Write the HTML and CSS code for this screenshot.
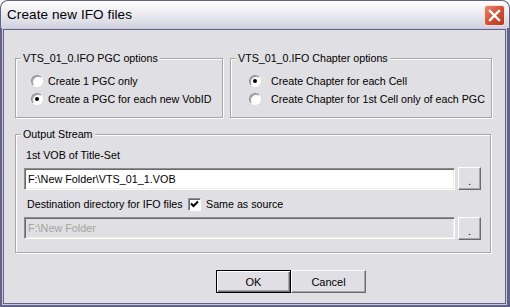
FILE: index.html
```html
<!DOCTYPE html>
<html lang="en">
<head>
  <meta charset="UTF-8" />
  <title>Create new IFO files</title>
  <link rel="stylesheet" href="styles.css">
</head>
<body>
  <div class="window">
    <div class="titlebar">
      <span class="title">Create new IFO files</span>
      <span class="close">
        <svg width="21" height="21" viewBox="0 0 21 21">
          <path d="M6 6 L15 15 M15 6 L6 15" stroke="#fff" stroke-width="2.4" stroke-linecap="square" fill="none" />
        </svg>
      </span>
    </div>
    <div class="frame">
      <div class="client">
        <div class="options">
          <div class="group pgc">
            <span class="legend">VTS_01_0.IFO PGC options</span>
            <label class="radio"><span class="dot"></span>Create 1 PGC only</label>
            <label class="radio"><span class="dot checked"></span>Create a PGC for each new VobID</label>
          </div>
          <div class="group chapter">
            <span class="legend">VTS_01_0.IFO Chapter options</span>
            <label class="radio"><span class="dot checked"></span>Create Chapter for each Cell</label>
            <label class="radio"><span class="dot"></span>Create Chapter for 1st Cell only of each PGC</label>
          </div>
        </div>

        <div class="group output">
          <span class="legend">Output Stream</span>
          <div class="label">1st VOB of Title-Set</div>
          <div class="field-row first">
            <div class="field">F:\New Folder\VTS_01_1.VOB</div>
            <span class="btn browse">.</span>
          </div>
          <div class="check-row">
            <span class="check-label">Destination directory for IFO files</span>
            <span class="check">
              <svg width="9" height="9" viewBox="0 0 9 9">
                <path d="M1 3.5 L3.5 6 L8 1.5" stroke="#000" stroke-width="2" fill="none" />
              </svg>
            </span>
            <span>Same as source</span>
          </div>
          <div class="field-row">
            <div class="field disabled">F:\New Folder</div>
            <span class="btn browse">.</span>
          </div>
        </div>

        <div class="actions">
          <span class="btn default">OK</span>
          <span class="btn">Cancel</span>
        </div>
      </div>
    </div>
  </div>
</body>
</html>
```

FILE: styles.css
```css
body {
  margin: 0;
  font-family: "Liberation Sans", Arial, sans-serif;
  font-size: 10.7px;
  color: #000;
  background: #fff;
  white-space: nowrap;
}
.window {
  width: 510px;
  height: 307px;
  box-sizing: border-box;
  background: #62628a;
  border-radius: 8px 8px 0 0;
  display: flex;
  flex-direction: column;
}
.titlebar {
  height: 27px;
  margin: 1px 1px 0;
  border-radius: 7px 7px 0 0;
  background: linear-gradient(#ffffff, #f0f0f4 35%, #dcdce6 80%, #d2d2de);
  display: flex;
  align-items: center;
  justify-content: space-between;
  padding: 0 4px 0 6px;
}
.title {
  font-size: 13.5px;
  color: #000;
  letter-spacing: 0.1px;
}
.close {
  width: 19px;
  height: 19px;
  border: 1px solid #f6ded8;
  border-radius: 3px;
  background: linear-gradient(135deg, #e98a72, #d2553c 45%, #b8351f);
  display: flex;
  margin-top: 2px;
}
.close svg {
  margin: -1px;
}
.frame {
  flex: 1;
  margin: 0 3px 2px 2px;
  padding: 1px;
  background: #c9c9da;
  display: flex;
}
.client {
  flex: 1;
  border: 1px solid #62628a;
  background: #e0dfe3;
}
.options {
  display: flex;
  gap: 7px;
  margin: 28px 0 0 11px;
}
.group {
  box-sizing: border-box;
  border: 1px solid #a7a6aa;
  box-shadow: 1px 1px 0 #fff, inset 1px 1px 0 #fff;
  display: flex;
  flex-direction: column;
}
.legend {
  align-self: flex-start;
  margin: -7px 0 0 5px;
  padding: 0 2px;
  line-height: 13px;
  background: #e0dfe3;
}
.pgc {
  width: 208px;
  height: 60px;
}
.chapter {
  width: 262px;
  height: 60px;
}
.radio {
  display: flex;
  align-items: center;
  height: 18px;
  padding-left: 15px;
}
.pgc .radio:first-of-type,
.chapter .radio:first-of-type {
  margin-top: 7px;
}
.chapter .radio {
  padding-left: 18px;
}
.chapter .dot {
  margin-right: 10px;
}
.dot {
  width: 10px;
  height: 10px;
  border: 1px solid;
  border-color: #8d8c91 #fff #fff #8d8c91;
  border-radius: 50%;
  background: #fff;
  box-shadow: inset 1px 1px 0 #a09fa4;
  margin-right: 5px;
  display: flex;
  align-items: center;
  justify-content: center;
}
.dot.checked::after {
  content: "";
  width: 4px;
  height: 4px;
  border-radius: 50%;
  background: #000;
}
.output {
  width: 476px;
  height: 119px;
  margin: 16px 0 0 11px;
}
.label {
  margin-top: 8px;
  padding-left: 10px;
  line-height: 13px;
}
.field-row {
  display: flex;
  padding: 0 9px 0 8px;
  margin-top: 6px;
}
.field-row.first {
  margin-top: 5px;
}
.field-row.first .field {
  margin-top: 1px;
}
.field {
  flex: 1;
  height: 22px;
  box-sizing: border-box;
  border: 1px solid;
  border-color: #8d8c91 #fff #fff #8d8c91;
  box-shadow: inset 1px 1px 0 #6b6a70, inset -1px -1px 0 #f1efe2;
  background: #fff;
  padding-left: 3px;
  display: flex;
  align-items: center;
  font-size: 10.8px;
}
.field.disabled {
  background: #e0dfe3;
  color: #a5a49f;
}
.check-row {
  display: flex;
  align-items: center;
  height: 14px;
  margin-top: 7px;
  padding-left: 11px;
}
.check-label {
  width: 161px;
}
.check {
  width: 11px;
  height: 11px;
  border: 1px solid;
  border-color: #8d8c91 #fff #fff #8d8c91;
  box-shadow: inset 1px 1px 0 #6b6a70;
  background: #fff;
  margin-right: 5px;
  display: flex;
  align-items: center;
  justify-content: center;
}
.btn {
  box-sizing: border-box;
  width: 75px;
  height: 23px;
  border: 1px solid;
  border-color: #fff #6b6a70 #6b6a70 #fff;
  box-shadow: inset -1px -1px 0 #a7a6aa;
  background: #e0dfe3;
  display: flex;
  align-items: center;
  justify-content: center;
  font-size: 11px;
}
.btn.browse {
  width: 23px;
  margin-left: 3px;
  padding-top: 4px;
}
.btn.default {
  border: 1px solid #000;
  box-shadow: inset 1px 1px 0 #fff, inset -1px -1px 0 #6b6a70, inset -2px -2px 0 #a7a6aa;
}
.actions {
  display: flex;
  margin-top: 17px;
  padding-left: 212px;
}
```
